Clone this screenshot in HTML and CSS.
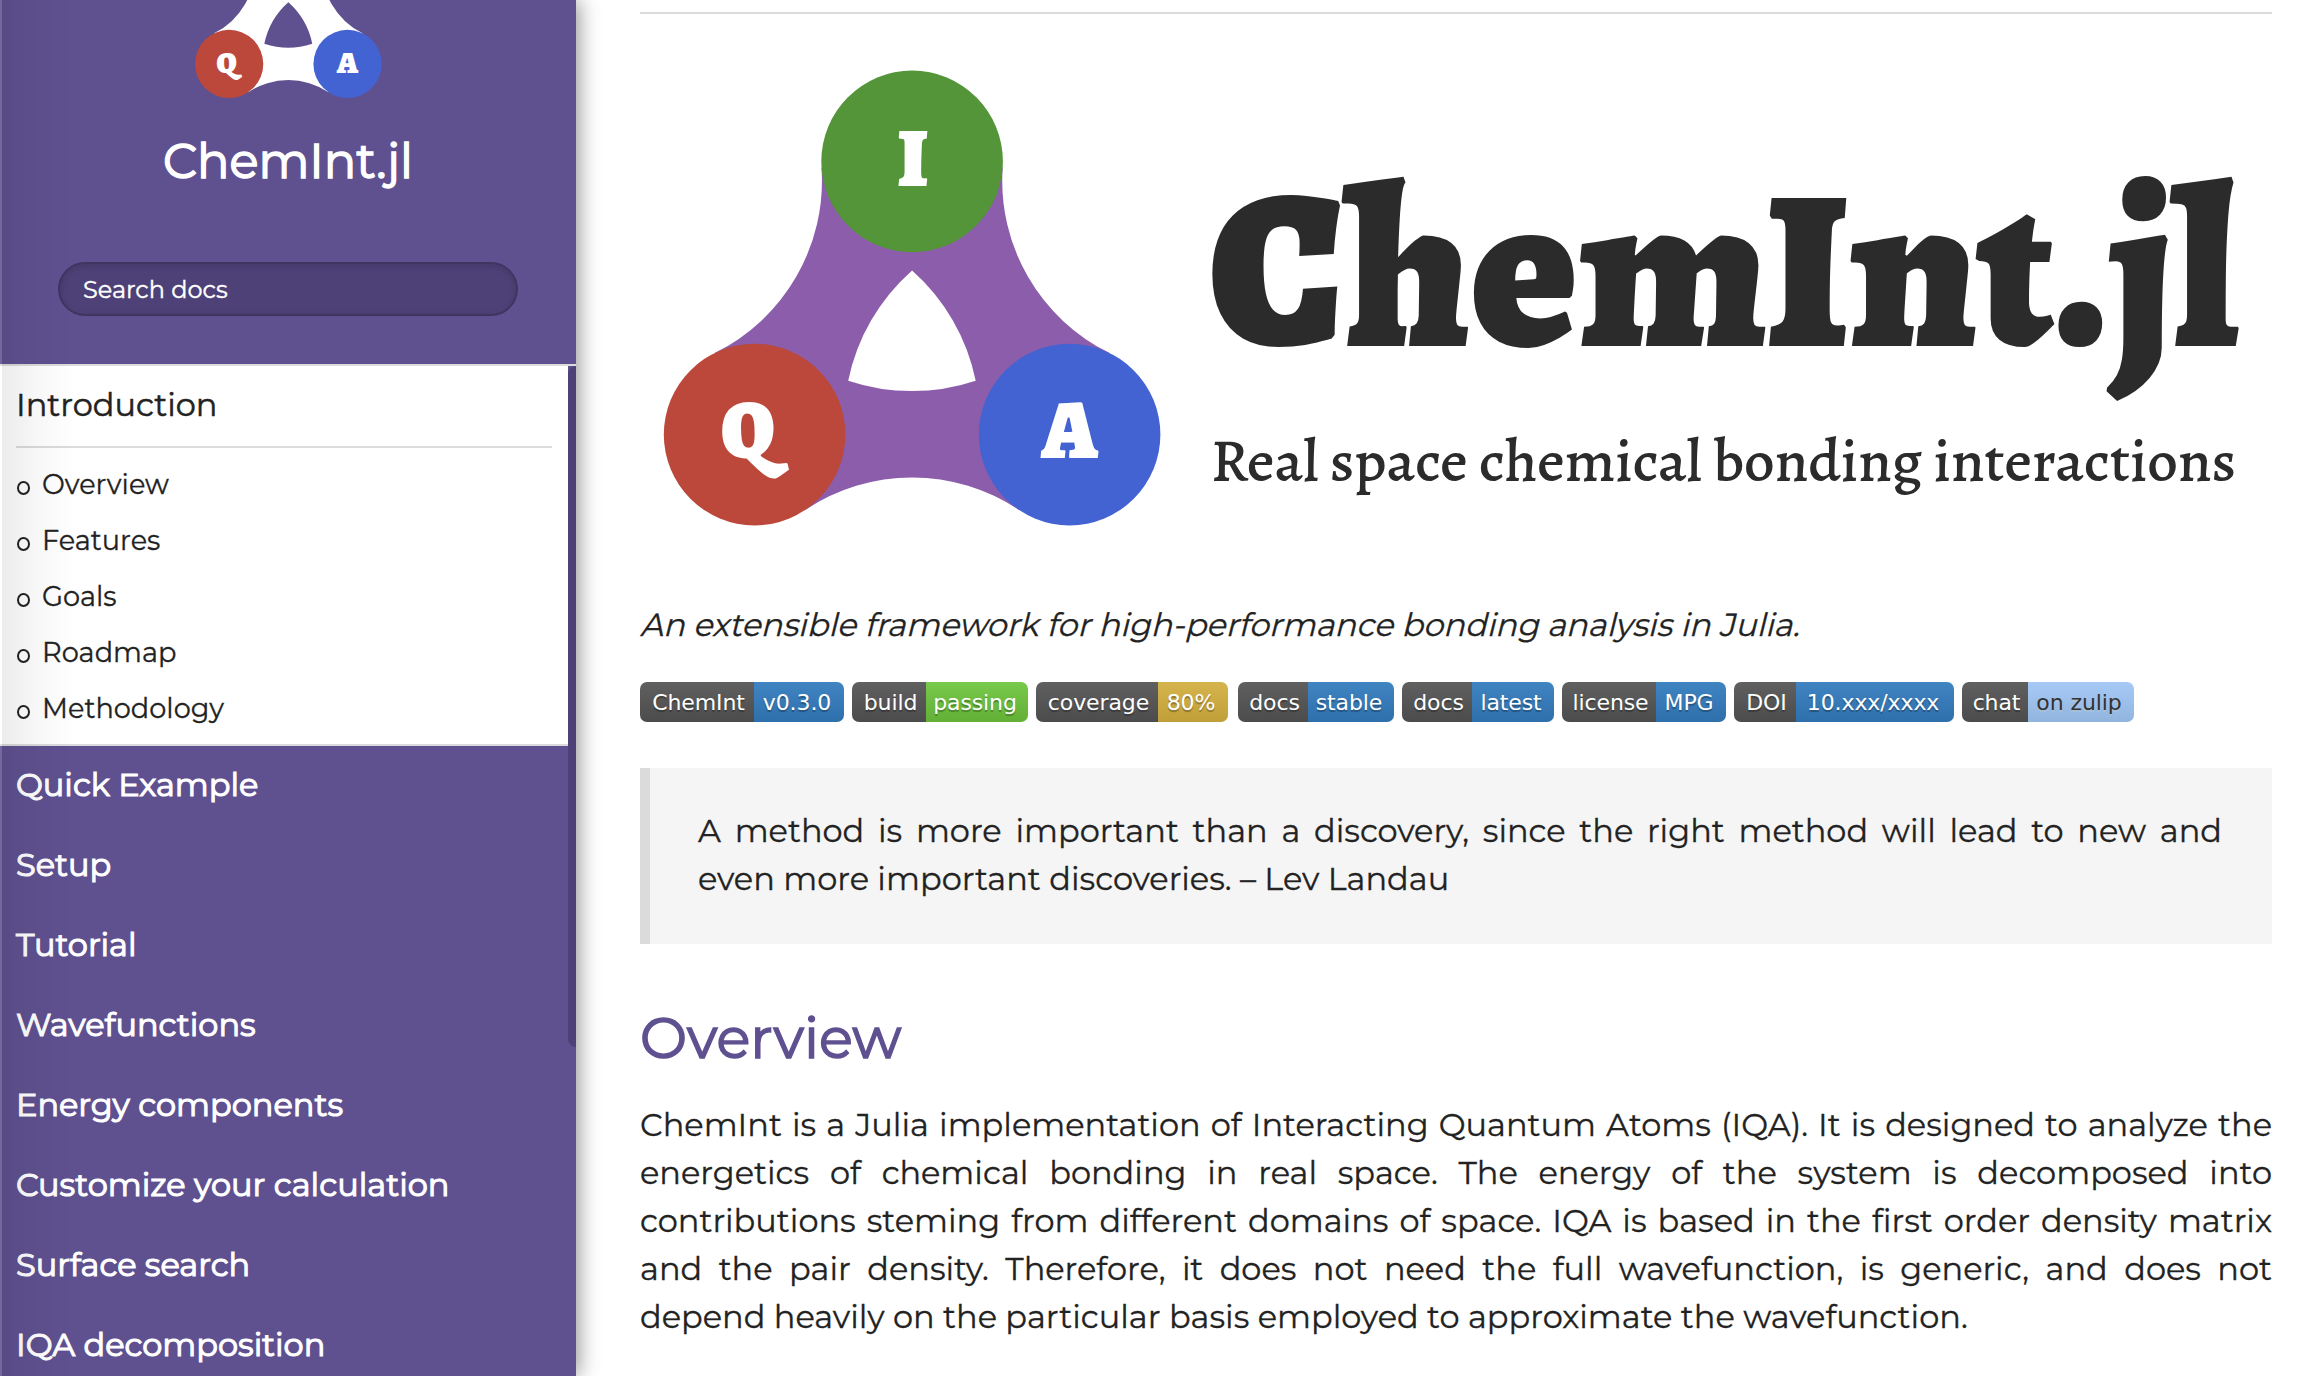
FILE: index.html
```
<!DOCTYPE html>
<html lang="en">
<head>
<meta charset="utf-8">
<title>Introduction · ChemInt.jl</title>
<link rel="stylesheet" href="styles.css">
</head>
<body>
<div class="page">
  <nav class="sidebar">
    <header class="brand">
      <svg class="brand-logo" viewBox="576 264.4 673 266" width="253" height="100">
        <path fill="#fff" fill-rule="evenodd" d="M821.5 167.5A192 192 0 0 1 714.6 353.1L805.2 510A192 192 0 0 1 1019 510L1109.6 353.1A192 192 0 0 1 1002.7 167.5ZM912.1 270.4A201 201 0 0 0 848.2 380.7A201 201 0 0 0 975.7 380.7A201 201 0 0 0 912.1 270.4Z"/>
        <circle cx="754.6" cy="434.6" r="90.8" fill="#bb483a"/>
        <circle cx="1069.6" cy="434.6" r="90.8" fill="#4463d2"/>
        <text class="atom" x="748" y="458" textLength="54" lengthAdjust="spacingAndGlyphs">Q</text>
        <text class="atom" x="1069.5" y="458" textLength="57" lengthAdjust="spacingAndGlyphs">A</text>
      </svg>
      <h1 class="brand-name">ChemInt.jl</h1>
      <div class="search">Search docs</div>
    </header>
    <div class="menu">
      <section class="current">
        <h2 class="current-title">Introduction</h2>
        <ul class="toc">
          <li>Overview</li>
          <li>Features</li>
          <li>Goals</li>
          <li>Roadmap</li>
          <li>Methodology</li>
        </ul>
      </section>
      <ul class="links">
        <li>Quick Example</li>
        <li>Setup</li>
        <li>Tutorial</li>
        <li>Wavefunctions</li>
        <li>Energy components</li>
        <li>Customize your calculation</li>
        <li>Surface search</li>
        <li>IQA decomposition</li>
      </ul>
      <div class="scrollbar"></div>
    </div>
  </nav>
  <main class="content">
    <hr class="rule">
    <svg class="hero" viewBox="640 14 1632 560" width="1632" height="560">
      <path fill="#8b5dab" fill-rule="evenodd" d="M821.5 167.5A192 192 0 0 1 714.6 353.1L805.2 510A192 192 0 0 1 1019 510L1109.6 353.1A192 192 0 0 1 1002.7 167.5ZM912.1 270.4A201 201 0 0 0 848.2 380.7A201 201 0 0 0 975.7 380.7A201 201 0 0 0 912.1 270.4Z"/>
      <circle cx="912.1" cy="161.4" r="90.8" fill="#549539"/>
      <circle cx="754.6" cy="434.6" r="90.8" fill="#bb483a"/>
      <circle cx="1069.6" cy="434.6" r="90.8" fill="#4463d2"/>
      <text class="atom" x="912.8" y="186" textLength="31" lengthAdjust="spacingAndGlyphs">I</text>
      <text class="atom" x="748" y="458" textLength="54" lengthAdjust="spacingAndGlyphs">Q</text>
      <text class="atom" x="1069.5" y="458" textLength="57" lengthAdjust="spacingAndGlyphs">A</text>
      <text class="wordmark" x="1209" y="345" textLength="1030" lengthAdjust="spacingAndGlyphs">ChemInt.jl</text>
      <text class="slogan" x="1211" y="480.5" textLength="1025" lengthAdjust="spacingAndGlyphs">Real space chemical bonding interactions</text>
    </svg>
    <p class="tagline">An extensible framework for high-performance bonding analysis in Julia.</p>
    <div class="badges">
      <span class="badge"><b style="width:114px">ChemInt</b><i style="width:90px">v0.3.0</i></span>
      <span class="badge"><b style="width:74px">build</b><i class="green" style="width:102px">passing</i></span>
      <span class="badge gap"><b style="width:122px">coverage</b><i class="gold" style="width:70px">80%</i></span>
      <span class="badge"><b style="width:70px">docs</b><i style="width:86px">stable</i></span>
      <span class="badge"><b style="width:70px">docs</b><i style="width:82px">latest</i></span>
      <span class="badge"><b style="width:94px">license</b><i style="width:70px">MPG</i></span>
      <span class="badge"><b style="width:62px">DOI</b><i style="width:158px">10.xxx/xxxx</i></span>
      <span class="badge"><b style="width:66px">chat</b><i class="sky" style="width:106px">on zulip</i></span>
    </div>
    <blockquote class="quote">A method is more important than a discovery, since the right method will lead to new and even more important discoveries. – Lev Landau</blockquote>
    <h2 class="heading">Overview</h2>
    <p class="para">ChemInt is a Julia implementation of Interacting Quantum Atoms (IQA). It is designed to analyze the energetics of chemical bonding in real space. The energy of the system is decomposed into contributions steming from different domains of space. IQA is based in the first order density matrix and the pair density. Therefore, it does not need the full wavefunction, is generic, and does not depend heavily on the particular basis employed to approximate the wavefunction.</p>
  </main>
</div>
</body>
</html>
```
FILE: styles.css
```
*, *::before, *::after { box-sizing: border-box; margin: 0; padding: 0; }
body {
  font-family: Montserrat, Inter, "Liberation Sans", sans-serif;
  font-size: 32px;
  line-height: 48px;
  color: #222;
  background: #fff;
}
ul { list-style: none; }
.page { display: flex; height: 1376px; overflow: hidden; }

/* sidebar */
.sidebar {
  position: relative;
  width: 576px;
  flex: none;
  display: flex;
  flex-direction: column;
  background: #5f5190;
  box-shadow: 2px 0 20px rgba(0, 0, 0, .45);
}
.sidebar::after {
  content: "";
  position: absolute;
  inset: 0 auto 0 0;
  width: 76px;
  border-left: 2px solid rgba(255, 255, 255, .13);
  background: linear-gradient(90deg, rgba(0, 0, 0, .075), rgba(0, 0, 0, .03) 45%, transparent);
}
.brand {
  flex: none;
  height: 366px;
  border-bottom: 2px solid #dbdbdb;
  display: flex;
  flex-direction: column;
  align-items: center;
}
.brand-logo { display: block; }
.atom { text-anchor: middle; }
.brand-name {
  margin-top: 25px;
  height: 72px;
  font-size: 48px;
  line-height: 72px;
  font-weight: 400;
  color: #fff;
  -webkit-text-stroke: 1.5px #fff;
}
.search {
  width: 460px;
  height: 54px;
  margin-top: 65px;
  padding-left: 23px;
  border: 2px solid #3f3560;
  border-radius: 27px;
  background: #4d4177;
  box-shadow: inset 0 2px 6px rgba(0, 0, 0, .12);
  font-size: 24px;
  line-height: 51px;
  color: #fff;
  -webkit-text-stroke: .4px #fff;
}
.menu { position: relative; flex: 1; }
.current {
  width: 568px;
  height: 380px;
  padding: 0 16px;
  background: #fff;
  border-bottom: 2px solid #dbdbdb;
}
.current-title {
  height: 82px;
  line-height: 78px;
  font-size: 32px;
  font-weight: 400;
  border-bottom: 2px solid #dbdbdb;
  -webkit-text-stroke: .5px #222;
}
.toc { padding-top: 9px; font-size: 27.2px; -webkit-text-stroke: .3px #222; }
.toc li { display: flex; align-items: center; height: 56px; line-height: 56px; }
.toc li::before {
  content: "";
  flex: none;
  width: 13px;
  height: 14px;
  margin: 5px 12px 0 1px;
  border: 2.5px solid #222;
  border-radius: 50%;
}
.links li {
  height: 80px;
  padding-left: 16px;
  line-height: 78px;
  font-size: 32px;
  color: #fff;
  -webkit-text-stroke: 1.1px #fff;
}
.scrollbar {
  position: absolute;
  top: 0;
  right: 0;
  width: 8px;
  height: 681px;
  border-radius: 8px 0 0 8px;
  background: #4d4177;
}

/* content */
.content { width: 1632px; margin-left: 64px; padding-top: 12px; }
.rule { border: 0; height: 2px; background: #dbdbdb; }
.hero { display: block; }
.atom { font: 900 84px Alegreya, "DejaVu Serif", serif; fill: #fff; }
.wordmark { font: 900 227px Alegreya, "DejaVu Serif", serif; fill: #2b2b2b; }
.slogan { font: 500 60px Alegreya, "Liberation Serif", serif; fill: #2b2b2b; }
.tagline {
  width: max-content;
  margin-top: 27px;
  white-space: nowrap;
  transform: skewX(-14deg);
  transform-origin: 0 35px;
  -webkit-text-stroke: .3px #222;
}
.badges { display: flex; gap: 8px; margin-top: 33px; }
.badge {
  display: flex;
  height: 40px;
  border-radius: 7px;
  overflow: hidden;
  font: 22px/41px Verdana, "DejaVu Sans", sans-serif;
  letter-spacing: -.1px;
  color: #fff;
  text-align: center;
  text-shadow: 0 2px 1px rgba(1, 1, 1, .3);
}
.badge b, .badge i { display: block; font-weight: 400; font-style: normal; }
.badge b { padding-left: 3px; background: linear-gradient(#606060, #4c4c4c); }
.badge i { padding-right: 4px; background: linear-gradient(#4084c2, #2e70ab); }
.badge .green { background: linear-gradient(#78c94c, #62b036); }
.badge .gold { background: linear-gradient(#d6b44d, #c09f3a); }
.badge .sky { background: linear-gradient(#a6caf5, #92b5df); color: #333; text-shadow: 0 2px 1px rgba(200, 200, 200, .4); }
.badge.gap { margin-right: 2px; }
.quote {
  margin-top: 46px;
  height: 176px;
  padding: 39px 50px 0 48px;
  border-left: 10px solid #dbdbdb;
  background: #f5f5f5;
  text-align: justify;
  -webkit-text-stroke: .3px #222;
}
.heading {
  margin-top: 58px;
  height: 72px;
  line-height: 72px;
  font-size: 56px;
  font-weight: 400;
  color: #5f5190;
  -webkit-text-stroke: 1.5px #5f5190;
}
.para { margin-top: 27px; text-align: justify; -webkit-text-stroke: .3px #222; }
```
